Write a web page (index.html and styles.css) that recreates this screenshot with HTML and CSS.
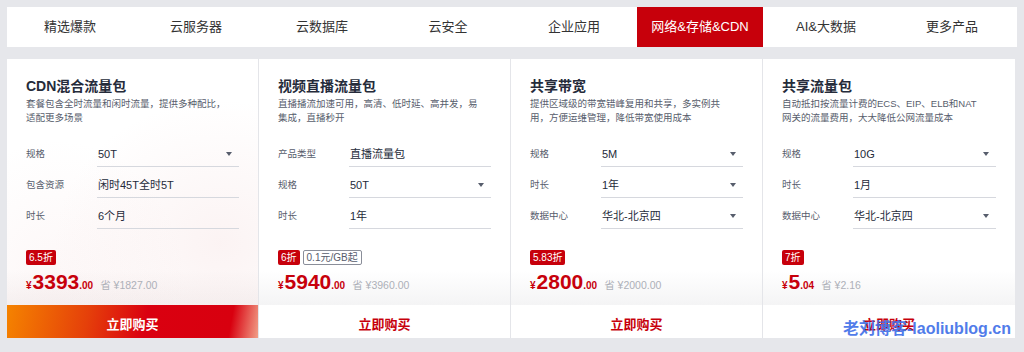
FILE: index.html
```html
<!DOCTYPE html>
<html lang="zh-CN">
<head>
    <meta charset="UTF-8">
    <title>网络&amp;存储&amp;CDN - 特惠专区</title>
    <link rel="stylesheet" href="styles.css">
</head>
<body>
    <nav class="tabs">
        <a class="tab">精选爆款</a>
        <a class="tab">云服务器</a>
        <a class="tab">云数据库</a>
        <a class="tab">云安全</a>
        <a class="tab">企业应用</a>
        <a class="tab active">网络&amp;存储&amp;CDN</a>
        <a class="tab">AI&amp;大数据</a>
        <a class="tab">更多产品</a>
    </nav>

    <div class="cards">
        <!-- CDN -->
        <div class="card featured">
            <div class="card-body">
                <h2 class="title">CDN混合流量包</h2>
                <p class="desc">套餐包含全时流量和闲时流量，提供多种配比，<br>适配更多场景</p>
                <div class="row"><span class="label">规格</span><span class="value">50T<i class="caret"></i></span></div>
                <div class="row"><span class="label">包含资源</span><span class="value">闲时45T全时5T</span></div>
                <div class="row"><span class="label">时长</span><span class="value">6个月</span></div>
                <div class="tags"><span class="discount">6.5折</span></div>
                <div class="price"><span class="yen">¥</span><span class="num">3393</span><span class="cents">.00</span><span class="save">省 ¥1827.00</span></div>
            </div>
            <a class="buy">立即购买</a>
        </div>

        <!-- 视频直播 -->
        <div class="card">
            <div class="card-body">
                <h2 class="title">视频直播流量包</h2>
                <p class="desc">直播播流加速可用，高清、低时延、高并发，易<br>集成，直播秒开</p>
                <div class="row"><span class="label">产品类型</span><span class="value">直播流量包</span></div>
                <div class="row"><span class="label">规格</span><span class="value">50T<i class="caret"></i></span></div>
                <div class="row"><span class="label">时长</span><span class="value">1年</span></div>
                <div class="tags"><span class="discount">6折</span><span class="note">0.1元/GB起</span></div>
                <div class="price"><span class="yen">¥</span><span class="num">5940</span><span class="cents">.00</span><span class="save">省 ¥3960.00</span></div>
            </div>
            <a class="buy">立即购买</a>
        </div>

        <!-- 共享带宽 -->
        <div class="card">
            <div class="card-body">
                <h2 class="title">共享带宽</h2>
                <p class="desc">提供区域级的带宽错峰复用和共享，多实例共<br>用，方便运维管理，降低带宽使用成本</p>
                <div class="row"><span class="label">规格</span><span class="value">5M<i class="caret"></i></span></div>
                <div class="row"><span class="label">时长</span><span class="value">1年<i class="caret"></i></span></div>
                <div class="row"><span class="label">数据中心</span><span class="value">华北-北京四<i class="caret"></i></span></div>
                <div class="tags"><span class="discount">5.83折</span></div>
                <div class="price"><span class="yen">¥</span><span class="num">2800</span><span class="cents">.00</span><span class="save">省 ¥2000.00</span></div>
            </div>
            <a class="buy">立即购买</a>
        </div>

        <!-- 共享流量包 -->
        <div class="card">
            <div class="card-body">
                <h2 class="title">共享流量包</h2>
                <p class="desc">自动抵扣按流量计费的ECS、EIP、ELB和NAT<br>网关的流量费用，大大降低公网流量成本</p>
                <div class="row"><span class="label">规格</span><span class="value">10G<i class="caret"></i></span></div>
                <div class="row"><span class="label">时长</span><span class="value">1月</span></div>
                <div class="row"><span class="label">数据中心</span><span class="value">华北-北京四<i class="caret"></i></span></div>
                <div class="tags"><span class="discount">7折</span></div>
                <div class="price"><span class="yen">¥</span><span class="num">5</span><span class="cents">.04</span><span class="save">省 ¥2.16</span></div>
            </div>
            <a class="buy">立即购买</a>
        </div>
    </div>

    <div class="watermark">老刘博客-laoliublog.cn</div>
</body>
</html>
```

FILE: styles.css
```css
body {
    margin: 0;
    padding: 7px;
    background-color: #e6e7eb;
    font-family: "Liberation Sans", "Noto Sans CJK SC", sans-serif;
    color: #252b3a;
    position: relative;
    height: 338px;
    box-sizing: border-box;
}

.tabs {
    display: grid;
    grid-template-columns: repeat(8, 126px);
    height: 40px;
    background-color: #ffffff;
}
.tab {
    display: block;
    text-align: center;
    line-height: 40px;
    font-size: 13px;
    color: #333;
    cursor: pointer;
}
.tab.active {
    background-color: #c7000b;
    color: #ffffff;
}

.cards {
    display: grid;
    grid-template-columns: repeat(4, 252px);
    margin-top: 12px;
}
.card {
    display: flex;
    flex-direction: column;
    background-color: #ffffff;
    border-right: 1px solid #e4e5e9;
    box-sizing: border-box;
}
.card:last-child {
    border-right: none;
}
.card-body {
    height: 246px;
    box-sizing: border-box;
    padding: 17px 19px 0;
    background: linear-gradient(to bottom, #ffffff 86%, #f4f4f5 100%);
}
.featured .card-body {
    background:
        radial-gradient(ellipse at 85% 75%, rgba(235, 190, 190, 0.18), transparent 55%),
        radial-gradient(ellipse at 20% 90%, rgba(235, 190, 190, 0.12), transparent 45%),
        linear-gradient(to bottom, #ffffff 86%, #f6f3f3 100%);
}

.title {
    margin: 0;
    font-size: 14px;
    line-height: 20px;
    font-weight: bold;
    color: #252b3a;
}
.desc {
    margin: 1px 0 11px;
    font-size: 9.5px;
    line-height: 14px;
    color: #575d6c;
    white-space: nowrap;
}

.row {
    display: flex;
    height: 31px;
}
.label {
    width: 71px;
    flex-shrink: 0;
    padding-top: 9px;
    font-size: 9.5px;
    line-height: 18px;
    color: #575d6c;
}
.value {
    flex: 1;
    display: flex;
    justify-content: space-between;
    align-items: center;
    box-sizing: border-box;
    padding: 9px 7px 3px 1px;
    height: 31px;
    font-size: 11px;
    line-height: 18px;
    color: #252b3a;
    border-bottom: 1px solid #d6d8de;
}
.caret {
    width: 0;
    height: 0;
    border-left: 3px solid transparent;
    border-right: 3px solid transparent;
    border-top: 4px solid #575d6c;
}

.tags {
    display: flex;
    gap: 3px;
    margin-top: 21px;
    height: 15px;
}
.discount {
    background-color: #c7000b;
    color: #ffffff;
    font-size: 10px;
    line-height: 15px;
    padding: 0 3px;
    border-radius: 2px;
}
.note {
    border: 1px solid #8a8e99;
    color: #575d6c;
    font-size: 10px;
    line-height: 13px;
    padding: 0 3px;
    border-radius: 2px;
}

.price {
    margin-top: 5px;
    line-height: 24px;
    color: #c7000b;
    font-weight: bold;
    white-space: nowrap;
}
.yen {
    font-size: 10px;
    margin-right: 1px;
}
.num {
    font-size: 21px;
}
.cents {
    font-size: 10px;
}
.save {
    font-size: 10.5px;
    font-weight: normal;
    color: #adb0b8;
    margin-left: 7px;
}

.buy {
    display: block;
    height: 40px;
    line-height: 40px;
    text-align: center;
    font-size: 13px;
    font-weight: bold;
    color: #c7000b;
    background-color: #ffffff;
    cursor: pointer;
}
.featured .buy {
    color: #ffffff;
    background: linear-gradient(100deg, #f58300 0%, #e5400a 32%, #da0010 55%, #d8000f 88%, #f2a58c 100%);
}

.watermark {
    position: absolute;
    left: 843px;
    top: 315px;
    font-size: 16px;
    font-weight: bold;
    color: #3e6ee8;
    opacity: 0.9;
    white-space: nowrap;
}
```
